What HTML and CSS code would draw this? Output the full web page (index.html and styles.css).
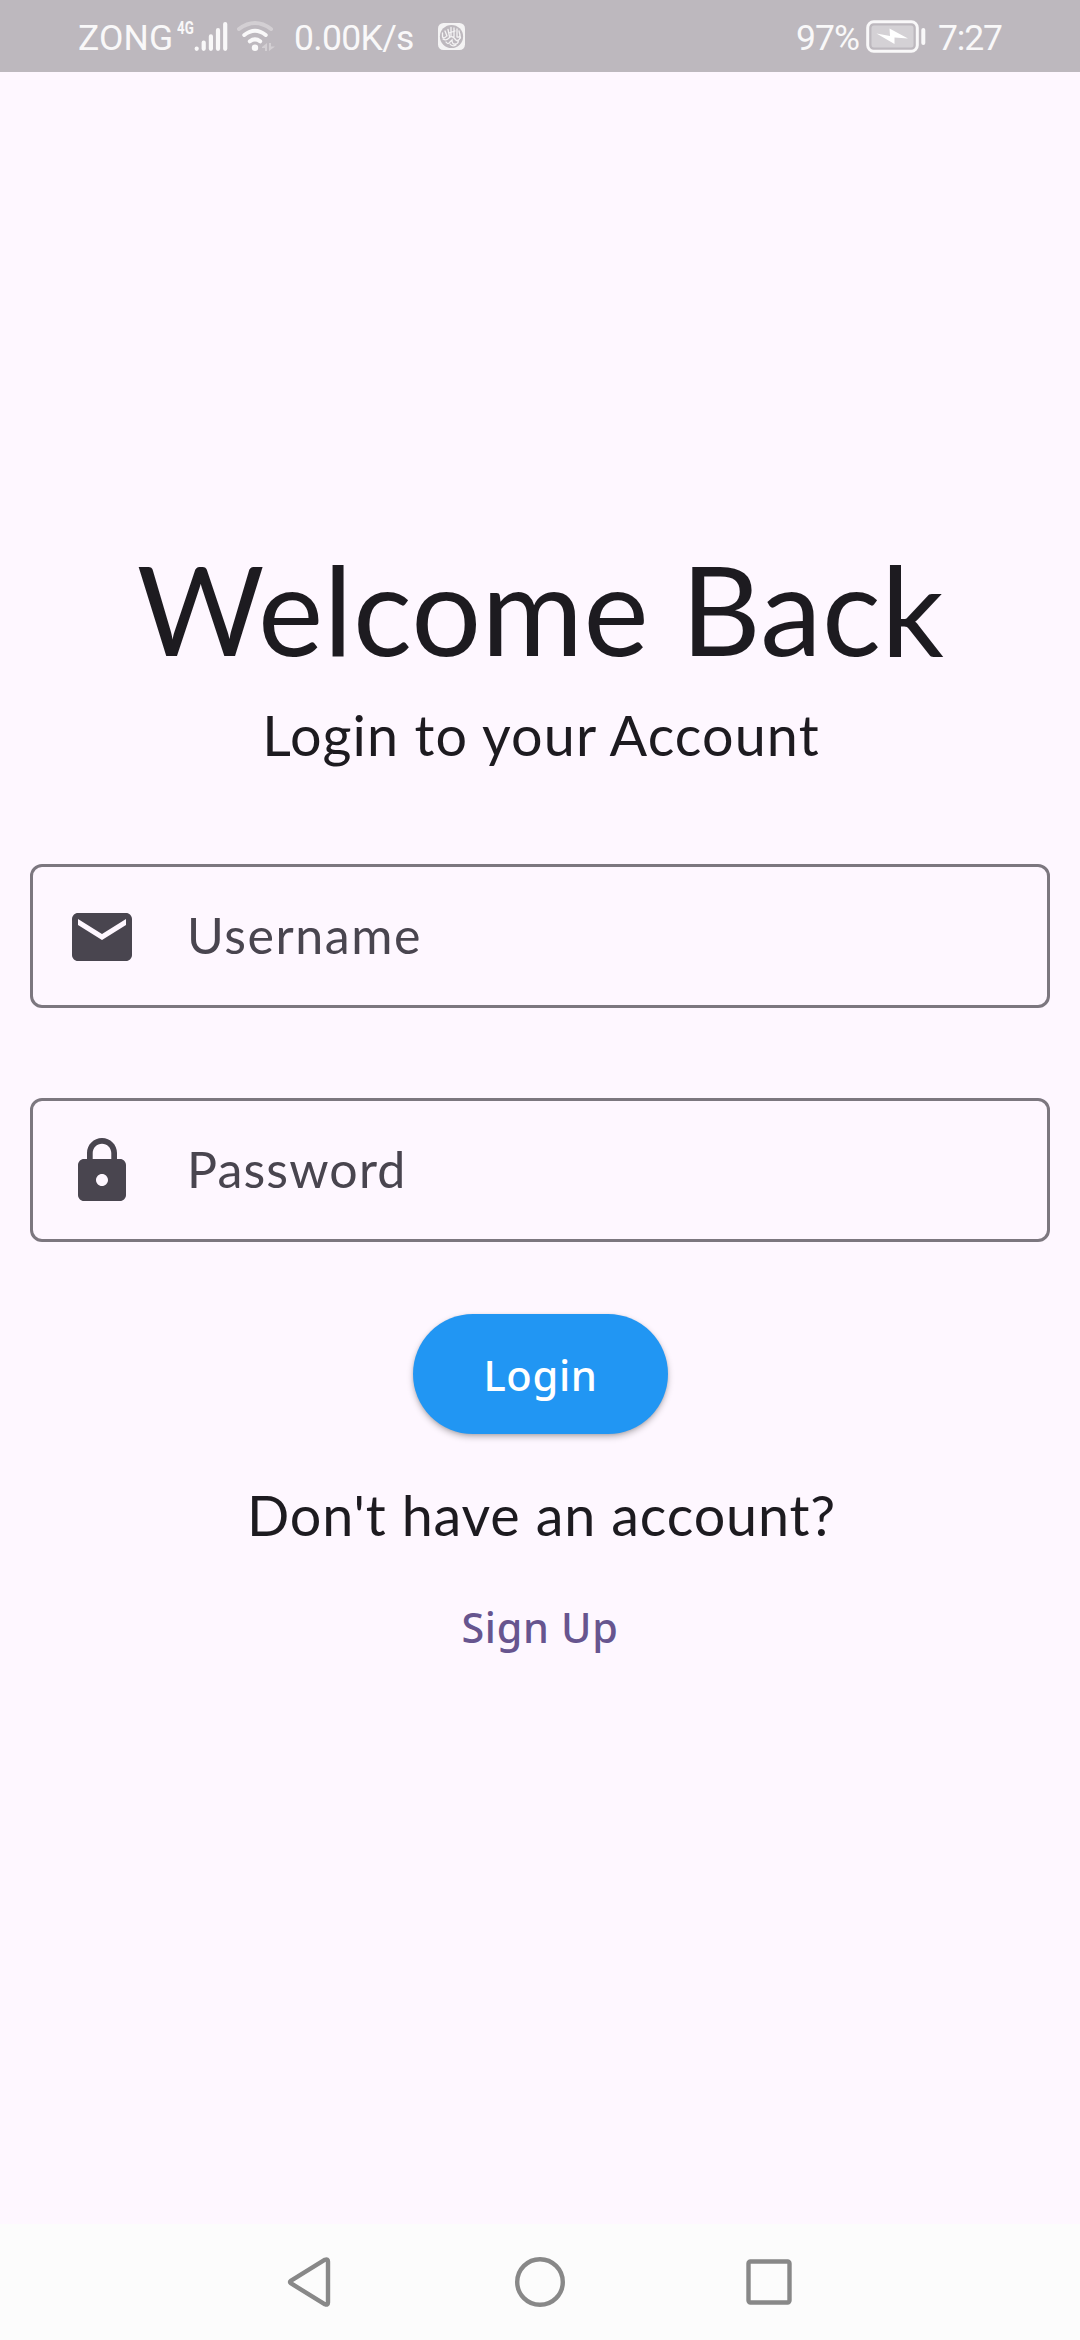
FILE: index.html
```html
<!DOCTYPE html>
<html lang="en">
<head>
<meta charset="utf-8">
<title>Login</title>
<link rel="stylesheet" href="styles.css">
</head>
<body>
<header class="status">
  <span class="carrier">ZONG</span>
  <span class="network">4G</span>
  <svg class="signal" width="34" height="32" viewBox="0 0 34 32" stroke="#f9f8f9" stroke-width="4.2" stroke-linecap="round">
    <path d="M2.7 28.6v.2M9.7 22.6v6.2M16.9 16.4v12.4M24 10.2v18.6M31.2 4v24.8"/>
  </svg>
  <svg class="wifi" width="38" height="32" viewBox="0 0 38 32" fill="none" stroke="#f9f8f9" stroke-width="4" stroke-linecap="round">
    <path d="M2 9Q18 -3 34 9" stroke="#d3cfd3"/>
    <path d="M7.3 15Q18 6.500 28.700 15"/>
    <path d="M12.800 21.300Q18 17.500 23.200 21.300"/>
    <circle cx="18" cy="27.700" r="3.200" fill="#f9f8f9" stroke="none"/>
    <path d="M25 27l5-4v8h-2v-3h-3zM38 26.500l-6 4.500v-8h2v3.500z" fill="#d3cfd3" stroke="none"/>
  </svg>
  <span class="speed">0.00K/s</span>
  <svg class="app" width="27" height="27" viewBox="0 0 27 27" fill="none">
    <rect width="27" height="27" rx="5.500" fill="#f4f3f4"/>
    <circle cx="13.500" cy="13.500" r="11.600" fill="#bdb8be"/>
    <path d="M4.500 10v4q2 2 4-1M7 8l2 5M10 6.500l1.500 7M13 4.500v9M16 5v8.500M19 6v8q3 1 3-3M5 16q3 2 6-1t6 1 5-1M8 19q2 3 4 0l2-2q0 5 4 4 3-1 2-4M12 21q2 3 6 1M11 10l6-2M21 8l1.500 7" stroke="#f4f3f4" stroke-width="1.300" stroke-linecap="round"/>
  </svg>
  <span class="percent">97%</span>
  <svg class="battery" width="60" height="33" viewBox="0 0 60 33">
    <rect x="1.700" y="1.700" width="49.600" height="29.600" rx="6" fill="none" stroke="#f9f8f9" stroke-width="3"/>
    <rect x="5.500" y="5.500" width="42" height="22" rx="2.500" fill="#d4d1d5"/>
    <path d="M10.500 13.500L24 16l-.5-7.500L42 18.500 28.500 17.500V24z" fill="#fff"/>
    <rect x="55.300" y="8" width="4" height="17" rx="2" fill="#f9f8f9"/>
  </svg>
  <span class="clock">7:27</span>
</header>
<main class="page">
  <h1 class="title">Welcome Back</h1>
  <p class="subtitle">Login to your Account</p>
  <div class="field">
    <svg class="field-icon" viewBox="0 0 24 24"><path d="M20 4H4c-1.100 0-1.990.9-1.990 2L2 18c0 1.100.9 2 2 2h16c1.100 0 2-.9 2-2V6c0-1.100-.9-2-2-2zm0 4l-8 5-8-5V6l8 5 8-5v2z"/></svg>
    <span class="label username">Username</span>
  </div>
  <div class="field second">
    <svg class="field-icon" viewBox="0 0 24 24"><path d="M18 8h-1V6c0-2.760-2.240-5-5-5S7 3.240 7 6v2H6c-1.100 0-2 .9-2 2v10c0 1.100.9 2 2 2h12c1.100 0 2-.9 2-2V10c0-1.100-.9-2-2-2zm-6 9c-1.100 0-2-.9-2-2s.9-2 2-2 2 .9 2 2-.9 2-2 2zm3.100-9H8.900V6c0-1.710 1.390-3.100 3.100-3.100s3.100 1.390 3.100 3.100v2z"/></svg>
    <span class="label password">Password</span>
  </div>
  <button class="login">Login</button>
  <p class="question">Don't have an account?</p>
  <a class="signup">Sign Up</a>
</main>
<nav class="nav">
  <svg width="52" height="52" viewBox="0 0 52 52"><path d="M5.700 24.800L40 3.700Q43 2.500 43 5.500V46.500Q43 49.500 40 48.300L5.700 27.200Q4.300 26 5.700 24.800z"/></svg>
  <svg width="52" height="52" viewBox="0 0 52 52"><circle cx="26" cy="26" r="22.800"/></svg>
  <svg width="52" height="52" viewBox="0 0 52 52"><rect x="5.500" y="5.500" width="41" height="41" rx="2"/></svg>
</nav>
</body>
</html>
```
FILE: styles.css
```css
* { box-sizing: border-box; }
body {
  margin: 0;
  width: 1080px;
  height: 2340px;
  display: flex;
  flex-direction: column;
  background: #fef7ff;
  color: #1d1b20;
  font-family: Lato, "Noto Sans", sans-serif;
  overflow: hidden;
}
.status {
  height: 72px;
  flex: none;
  display: flex;
  align-items: flex-start;
  padding-left: 78px;
  background: #bdb8be;
  color: #f9f8f9;
  font-family: Roboto, sans-serif;
  font-size: 35.5px;
  line-height: 44px;
  white-space: nowrap;
}
.status > * { flex: none; }
.carrier { width: 99px; margin-top: 16px; letter-spacing: .17px; }
.network {
  width: 17px;
  margin-top: 17px;
  font-size: 19px;
  line-height: 22px;
  font-weight: 700;
  transform: scaleX(.7);
  transform-origin: left;
}
.signal { margin-top: 20px; }
.wifi { margin: 20px 0 0 9px; }
.speed { width: 119px; margin: 16px 0 0 19px; letter-spacing: -.67px; }
.app { margin: 23px 0 0 25px; }
.percent { width: 69px; margin: 16px 0 0 331px; letter-spacing: -.93px; }
.battery { margin: 20px 0 0 1px; }
.clock { margin: 16px 0 0 12px; letter-spacing: -1.15px; }
.page {
  flex: 1;
  display: flex;
  flex-direction: column;
  align-items: center;
  padding: 461px 30px 0;
}
.title, .subtitle, .question { margin: 0; font-weight: 400; white-space: nowrap; }
.title { padding-left: 1px; font-size: 123.4px; line-height: 150px; letter-spacing: .4px; }
.subtitle { margin-top: 19px; padding-left: 2px; font-size: 55.7px; line-height: 66px; letter-spacing: 1.1px; }
.field {
  width: 1020px;
  height: 144px;
  margin-top: 96px;
  padding: 0 0 0 33px;
  display: flex;
  align-items: center;
  border: 3px solid #7c777f;
  border-radius: 12px;
  color: #49454f;
}
.second { margin-top: 90px; }
.field-icon { width: 72px; height: 72px; margin-top: 2px; fill: #49454f; }
.label { margin-left: 49px; padding-bottom: 2px; font-size: 50.1px; line-height: 60px; }
.username { letter-spacing: 1.57px; }
.password { letter-spacing: 1.16px; }
.login {
  width: 255px;
  height: 120px;
  margin-top: 72px;
  padding: 2px 0 0 1px;
  border: 0;
  border-radius: 60px;
  background: #2196f3;
  box-shadow: 0 3px 6px rgba(0, 0, 0, .26), 0 1px 3px rgba(0, 0, 0, .1);
  color: #fff;
  font: 500 41.7px/50px "Noto Sans", sans-serif;
  letter-spacing: .6px;
}
.question { margin-top: 48px; padding-left: 3px; font-size: 55.7px; line-height: 66px; letter-spacing: .85px; }
.signup {
  margin-top: 54px;
  color: #67558f;
  font: 500 41.3px/50px "Noto Sans", sans-serif;
  letter-spacing: .7px;
}
.nav {
  height: 116px;
  flex: none;
  display: flex;
  justify-content: center;
  gap: 177px;
  padding-top: 32px;
  background: #fcfcfc;
}
.nav svg { fill: none; stroke: #888; stroke-width: 4.4; stroke-linejoin: round; }
```
